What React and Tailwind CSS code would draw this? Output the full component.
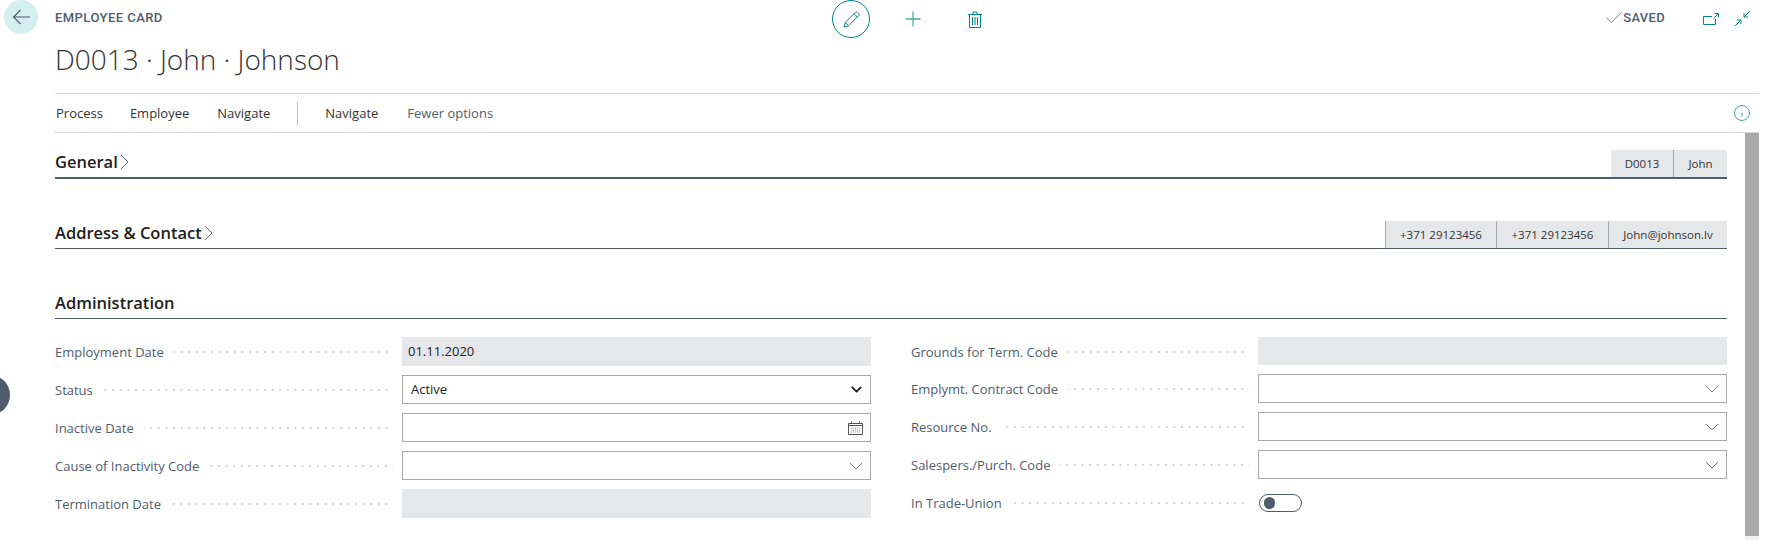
import React from 'react';
import { Plus, Check, Info, ChevronDown } from 'lucide-react';

const teal = '#00858a';

const Chevron = () => (
  <svg width="9" height="16" viewBox="0 0 9 16" fill="none" stroke="#505c6d" strokeWidth="0.9" className="ml-[2px] mt-[1px]"><path d="M1 1l7 7-7 7" /></svg>
);

const Field = ({ kind, value, short }) => {
  if (kind === 'toggle') {
    return (
      <div className="h-[29px] flex items-center">
        <div className="w-[43px] h-[18px] rounded-full border border-[#505c6d] flex items-center pl-[4px] ml-[1px]">
          <div className="w-[11px] h-[12px] rounded-full bg-[#505c6d]"></div>
        </div>
      </div>
    );
  }
  if (kind === 'gray') {
    return (
      <div className={`${short ? 'h-[28px]' : 'h-[29px]'} bg-[#e6e7e9] flex items-center pl-[6px] text-[13px] text-[#212121]`}>{value}</div>
    );
  }
  return (
    <div className="h-[29px] border border-[#a9a9a9] flex items-center justify-between pl-[8px] pr-[7px] text-[13px] text-[#212121]">
      <span className="pt-[1px]">{value}</span>
      {kind === 'select' && <ChevronDown size={17} strokeWidth={2.6} className="text-[#212121] -mr-[2px]" />}
      {kind === 'lookup' && (
        <svg width="14" height="8" viewBox="0 0 14 8" fill="none" stroke="#777" strokeWidth="1"><path d="M1 1l6 6 6-6" /></svg>
      )}
      {kind === 'date' && (
        <svg width="15" height="14" viewBox="0 0 15 14" fill="none" stroke="#555" strokeWidth="1">
          <path d="M.5 2.500h14v11H.5z" />
          <path d="M.5 4.500h14" />
          <path d="M3.500 .5v2M11.500 .5v2" />
          <path d="M3 7h9M3 9h9M3 11h9" strokeDasharray="1 1" stroke="#999" />
        </svg>
      )}
    </div>
  );
};

const Row = ({ label, kind, value, short }) => (
  <div className={`flex items-center ${short ? 'h-[28px]' : 'h-[29px]'}`}>
    <span className={`text-[13px] text-[#505c6d] whitespace-nowrap ${short ? 'mt-[4px]' : 'mt-[2px]'}`}>{label}</span>
    <div className="flex-1 h-[2px] ml-[10px] mr-[9px] mt-[1px] bg-[linear-gradient(to_right,#d0d3d7_2px,transparent_2px)] bg-[length:7.6px_2px] bg-repeat-x bg-right"></div>
    <div className="w-[469px] flex-shrink-0">
      <Field kind={kind} value={value} short={short} />
    </div>
  </div>
);

const Tags = ({ items, bordered }) => (
  <div className={`flex h-[27px] bg-[#e6e7e9] text-[11.5px] text-[#333] ${bordered ? 'border-l border-[#a9a9a9]' : ''}`}>
    {items.map((item, i) => (
      <div key={i} className={`flex items-center justify-center ${item.w} ${i > 0 ? 'border-l border-[#a9a9a9]' : ''}`}>{item.text}</div>
    ))}
  </div>
);

const leftRows = [
  { label: 'Employment Date', kind: 'gray', value: '01.11.2020' },
  { label: 'Status', kind: 'select', value: 'Active' },
  { label: 'Inactive Date', kind: 'date' },
  { label: 'Cause of Inactivity Code', kind: 'lookup' },
  { label: 'Termination Date', kind: 'gray' },
];

const rightRows = [
  { label: 'Grounds for Term. Code', kind: 'gray', short: true },
  { label: 'Emplymt. Contract Code', kind: 'lookup' },
  { label: 'Resource No.', kind: 'lookup' },
  { label: 'Salespers./Purch. Code', kind: 'lookup' },
  { label: 'In Trade-Union', kind: 'toggle' },
];

export default function App() {
  return (
    <div className="relative w-[1770px] h-[540px] overflow-hidden bg-white font-['Open_Sans',sans-serif] text-[#212121]">
      {/* Floating handle on the left edge */}
      <div className="absolute -left-[30px] top-[375px] w-[40px] h-[40px] rounded-full bg-[#505c6d]"></div>

      {/* Header */}
      <header className="h-[93px] flex pl-[4px] pr-[19px]">
        <div className="w-[34px] h-[34px] rounded-full bg-[#d5eef0] flex items-center justify-center flex-shrink-0">
          <svg width="18" height="16" viewBox="0 0 18 16" fill="none" stroke="#505c6d" strokeWidth="1.1"><path d="M8.500 1L1.500 8l7 7M1.500 8H18" /></svg>
        </div>
        <div className="w-[400px] ml-[17px] flex-shrink-0">
          <div className="mt-[9px] leading-[18px] text-[13px] tracking-[0.45px] text-[#505c6d] font-['Roboto',sans-serif] font-medium">EMPLOYEE CARD</div>
          <h1 className="mt-[13px] text-[28px] leading-[38px] font-light whitespace-nowrap text-[#333]">D0013 · John · Johnson</h1>
        </div>
        <div className="flex items-start ml-[377px]">
          <div className="w-[38px] h-[38px] rounded-full border border-[#00858a] flex items-center justify-center">
            <svg width="17" height="17" viewBox="0 0 17 17" fill="none" stroke={teal} strokeWidth="1"><path d="M1 16l1.300-4.600L12.400 1.300a1.500 1.500 0 0 1 2.100 0l1.200 1.200a1.500 1.500 0 0 1 0 2.100L5.600 14.700zM2.300 11.400l3.300 3.300M11 2.700l3.300 3.300" /></svg>
          </div>
          <Plus size={24} strokeWidth={1.3} className="ml-[31px] mt-[7px] text-[#4fa9ad]" />
          <svg width="14" height="17" viewBox="0 0 14 17" fill="none" stroke={teal} strokeWidth="1" className="ml-[43px] mt-[11px]">
            <path d="M0 3.500h14M5 3.500V1h4v2.500M1.500 3.500v13h11v-13M4.500 6v8M7 6v8M9.500 6v8" />
          </svg>
        </div>
        <div className="flex items-start ml-auto">
          <Check size={22} strokeWidth={0.9} className="mt-[7px] -mr-[2px] text-[#505c6d]" />
          <span className="mt-[9px] leading-[18px] text-[13px] tracking-[0.3px] text-[#505c6d] font-['Roboto',sans-serif] font-medium">SAVED</span>
          <svg width="16" height="12" viewBox="0 0 16 12" fill="none" stroke={teal} strokeWidth="1" className="ml-[38px] mt-[13px]">
            <path d="M9 3.500H.5v8h12V6M10.500 5.500l5-5M11.500 .5H15.500V4.500" />
          </svg>
          <svg width="17" height="17" viewBox="0 0 17 17" fill="none" stroke={teal} strokeWidth="1" className="ml-[15px] mt-[10px]">
            <path d="M16 1l-6 6M10 3v4h4M1 16l6-6M3 10h4v4" />
          </svg>
        </div>
      </header>

      {/* Action bar */}
      <nav className="ml-[55px] mr-[11px] h-[40px] border-y border-[#d6d8db] flex items-center text-[13px] text-[#333]">
        <span className="ml-[1px] mt-[1px]">Process</span>
        <span className="ml-[27px] mt-[1px]">Employee</span>
        <span className="ml-[28px] mt-[1px]">Navigate</span>
        <div className="w-px h-[23px] bg-[#b8bcc2] ml-[27px]"></div>
        <span className="ml-[27px] mt-[1px]">Navigate</span>
        <span className="ml-[29px] mt-[1px] text-[#505c6d]">Fewer options</span>
        <Info size={18} strokeWidth={1} className="ml-auto mr-[8px] text-[#00858a]" />
      </nav>

      {/* Body + scrollbar */}
      <div className="flex">
        <main className="ml-[55px] w-[1672px]">
          <section className="mt-[17px] h-[29px] flex items-end justify-between border-b-2 border-[#505c6d]">
            <div className="flex items-center self-center mb-[4px] text-[16.500px] font-semibold leading-[22px] text-[#212121]">
              General<Chevron />
            </div>
            <Tags items={[{ text: 'D0013', w: 'w-[62px]' }, { text: 'John', w: 'w-[54px]' }]} />
          </section>

          <section className="mt-[42px] h-[28px] flex items-end justify-between border-b border-[#505c6d]">
            <div className="flex items-center self-center mb-[4px] text-[16.500px] font-semibold leading-[22px] text-[#212121]">
              Address &amp; Contact<Chevron />
            </div>
            <Tags bordered items={[{ text: '+371 29123456', w: 'w-[110px]' }, { text: '+371 29123456', w: 'w-[112px]' }, { text: 'John@johnson.lv', w: 'w-[119px]' }]} />
          </section>

          <section className="mt-[43px] h-[27px] flex items-center border-b border-[#505c6d] pb-[4px] text-[16.500px] font-semibold text-[#212121]">
            Administration
          </section>

          <div className="mt-[18px] grid grid-cols-2 gap-x-[40px]">
            <div className="flex flex-col gap-[9px]">
              {leftRows.map((r) => <Row key={r.label} {...r} />)}
            </div>
            <div className="flex flex-col gap-[9px]">
              {rightRows.map((r) => <Row key={r.label} {...r} />)}
            </div>
          </div>
        </main>
        <div className="ml-[18px] w-[14px] h-[407px] flex flex-col">
          <div className="h-[403px] bg-[#a9a9a9]"></div>
          <div className="flex-1 bg-[#f0f0f0]"></div>
        </div>
      </div>
    </div>
  );
}
